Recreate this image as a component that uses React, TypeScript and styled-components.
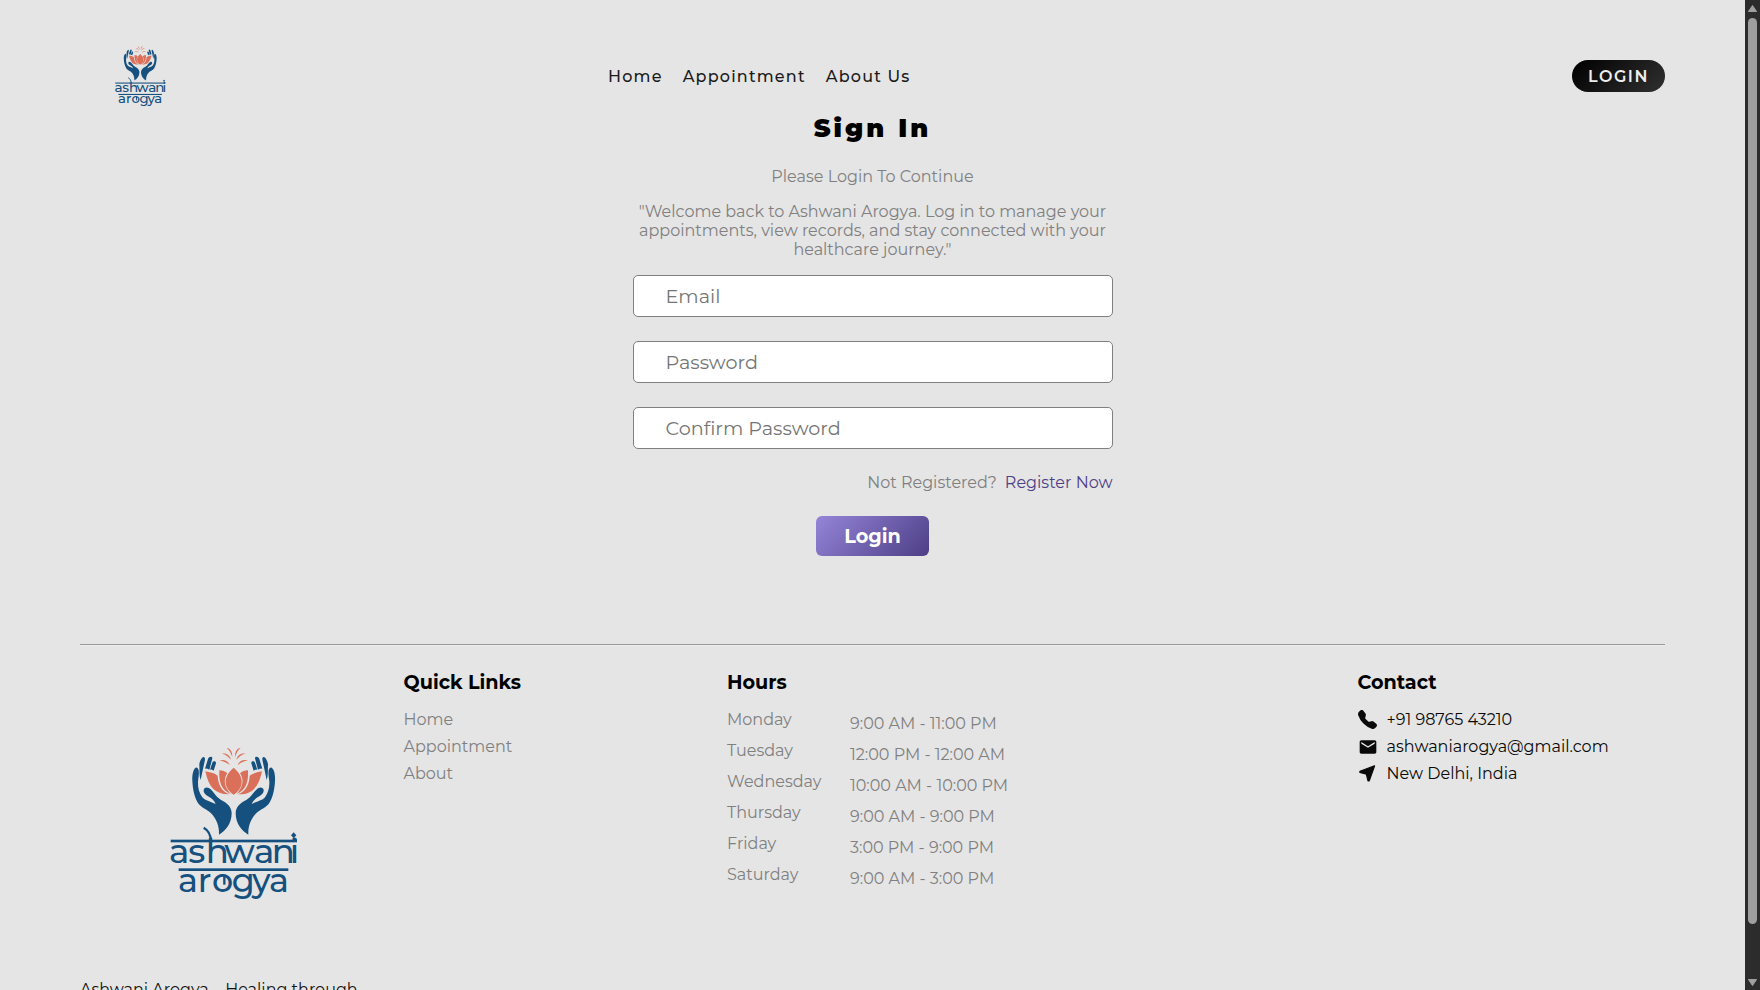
import React from "react";
import styled, { createGlobalStyle } from "styled-components";
import { BsTelephoneFill } from "react-icons/bs";
import { MdEmail } from "react-icons/md";

const GlobalStyle = createGlobalStyle`
  * { box-sizing: border-box; }
  body {
    margin: 0;
    overflow: hidden;
    background: #e5e5e5;
    font-family: Montserrat, Inter, "Noto Sans", sans-serif;
    font-size: 16px;
  }
  ul, h1, h3, p { margin: 0; padding: 0; list-style: none; }
`;

const Viewport = styled.div`
  display: flex;
  height: 990px;
  overflow: hidden;
`;

const Page = styled.div`
  flex: 1;
  padding: 0 80px;
  overflow: hidden;
`;

const Header = styled.header`
  display: flex;
  align-items: center;
  height: 152px;
  margin-bottom: -40px;
`;

const Brand = styled.div`
  width: 527px;
  padding: 1px 0 0 27px;
`;

const Nav = styled.nav`
  display: flex;
  flex: 1;
  gap: 20px;
  padding: 1px 0 0 1px;
`;

const NavLink = styled.a`
  color: #1a1a1a;
  font-weight: 500;
  letter-spacing: 1.2px;
  line-height: 20px;
`;

const PillButton = styled.button`
  width: 93px;
  height: 32px;
  padding: 1px 0 0;
  border: 0;
  border-radius: 16px;
  background: linear-gradient(135deg, #000, #303030);
  color: #ededed;
  font: 600 16px/31px Montserrat, Inter, sans-serif;
  letter-spacing: 1.5px;
`;

const Form = styled.form`
  display: flex;
  flex-direction: column;
  align-items: center;
  width: 480px;
  margin: 0 auto;
`;

const Title = styled.h1`
  font-size: 25.6px;
  font-weight: 900;
  letter-spacing: 3.1px;
  line-height: 32px;
`;

const Subtitle = styled.p`
  margin-top: 23px;
  color: #808080;
  line-height: 20px;
`;

const Welcome = styled.p`
  margin: 15px 0 16px;
  color: #808080;
  line-height: 19px;
  text-align: center;
`;

const Field = styled.input`
  width: 480px;
  height: 42px;
  margin-bottom: 24px;
  padding: 0 32px;
  border: 1px solid #808080;
  border-radius: 5px;
  background: #fff;
  font: 400 19.2px Montserrat, Inter, sans-serif;
  &::placeholder {
    color: #757575;
    opacity: 1;
  }
`;

const RegisterRow = styled.p`
  display: flex;
  align-self: flex-end;
  gap: 8px;
  color: #808080;
  line-height: 20px;
`;

const RegisterLink = styled.a`
  color: #4f3f87;
`;

const SubmitButton = styled.button`
  width: 113px;
  height: 40px;
  margin-top: 23px;
  padding: 1px 0 0;
  border: 0;
  border-radius: 6px;
  background: linear-gradient(135deg, #9585d8, #4d3e86);
  color: #fff;
  font: 700 19.2px/39px Montserrat, Inter, sans-serif;
`;

const Footer = styled.footer`
  margin-top: 88px;
  border-top: 1px solid #999;
  box-shadow: inset 0 1px 0 #eeeeee;
`;

const FooterColumns = styled.div`
  display: grid;
  grid-template-columns: 323.5px 323.5px 630.5px 1fr;
  height: 333px;
  padding-top: 26px;
`;

const FooterLogo = styled.div`
  padding: 59px 0 0 70px;
`;

const FooterHeading = styled.h3`
  margin-bottom: 17px;
  font-size: 19.2px;
  font-weight: 700;
  line-height: 22px;
`;

const LinkList = styled.ul`
  display: grid;
  gap: 7px;
  color: #808080;
  line-height: 20px;
`;

const HoursTable = styled(LinkList)`
  gap: 11px;
`;

const HoursRow = styled.li`
  display: grid;
  grid-template-columns: 123px auto;
`;

const HoursTime = styled.span`
  padding-top: 4px;
  margin-bottom: -4px;
`;

const ContactItem = styled.li`
  display: flex;
  align-items: center;
  gap: 9px;
  height: 20px;
  color: #0a0a0a;
`;

const IconSlot = styled.span`
  display: flex;
  align-items: center;
  justify-content: center;
  width: 20px;
  height: 20px;
  margin-top: -1px;
`;

const Tagline = styled.p`
  margin-top: 2px;
  color: #111;
  line-height: 20px;
`;

const Scrollbar = styled.div`
  display: flex;
  flex-direction: column;
  align-items: center;
  justify-content: space-between;
  width: 15px;
  padding: 5px 0 4px;
  background: #2c2c2c;
`;

const ScrollThumb = styled.div`
  width: 9px;
  height: 906px;
  margin: 6px 0 auto;
  border-radius: 5px;
  background: #9f9f9f;
`;

const LogoSvg = styled.svg`
  display: block;
`;

const LocationArrow = () => (
  <svg width="17" height="17" viewBox="0 0 16 16">
    <path d="M14.6 0.9L0.9 5.9V7L7 8.7L8.5 14.9H9.6Z" fill="currentColor" stroke="currentColor" strokeWidth="1.2" strokeLinejoin="round" />
  </svg>
);

const Hand = () => (
  <g fill="#15507e">
    <path d="M137 113C129 118 126 136 127 152C128 178 134 205 146 222C158 236 176 240 188 255C200 270 208 288 207 314C226 303 245 282 245 250C245 230 231 219 212 209C196 200 192 185 178 175C170 170 162 172 161 180C160 188 166 194 174 199C185 205 193 212 197 222C182 214 168 212 158 203C148 190 143 174 144 155C145 142 148 134 146 121C144 113 140 111 137 113Z" />
    <path d="M148 102C150 92 156 81 161 81C167 82 165 90 163 98L157 126L152 150C147 138 149 122 148 102Z" />
    <path d="M165 116L174 87C176 80 187 77 187 85L178 119Q171 115 165 116Z" />
    <path d="M180 119L187 98C190 91 199 93 198 100L191 122Q186 118 180 119Z" />
  </g>
);

const Petals = () => (
  <g fill="#da705a">
    <path d="M208 121C206 155 214 181 242 192C223 171 219 148 232 130C226 124 217 122 208 121Z" />
    <path d="M166 124C176 172 196 194 238 193C213 183 204 161 203 137C192 128 179 127 166 124Z" />
    <path d="M230 54C242 55 247 66 247 81C242 69 239 60 230 54Z" />
    <path d="M216 71C229 68 239 75 243 89C235 80 228 73 216 71Z" />
    <path d="M209 92C222 87 234 94 239 105C228 97 221 93 209 92Z" />
  </g>
);

const Logo = ({ width }: { width: number }) => (
  <LogoSvg width={width} height={(width * 570) / 510} viewBox="0 0 510 570">
    <Hand />
    <Petals />
    <g transform="translate(502 0) scale(-1 1)">
      <Hand />
      <Petals />
    </g>
    <path d="M251 113C218 140 220 174 251 194C282 174 284 140 251 113Z" fill="#da705a" />
    <g fill="#15507e">
      <rect x="62" y="329" width="379" height="8" />
      <rect x="86" y="415" width="329" height="8" />
      <path d="M431 307l8 9-8 9-8-9z" />
    </g>
    <path d="M161 293C172 299 182 310 183 334" fill="none" stroke="#15507e" strokeWidth="7" />
    <path d="M223 436V464" fill="none" stroke="#15507e" strokeWidth="7" />
    <g fill="#15507e" fontFamily="Montserrat, sans-serif" fontWeight="500">
      <text x="57 115 167 223 312 365 419" y="398" fontSize="102">ashwani</text>
      <text x="84 143 186 245 306 357" y="485" fontSize="100">arogya</text>
    </g>
  </LogoSvg>
);

const hours = [
  ["Monday", "9:00 AM - 11:00 PM"],
  ["Tuesday", "12:00 PM - 12:00 AM"],
  ["Wednesday", "10:00 AM - 10:00 PM"],
  ["Thursday", "9:00 AM - 9:00 PM"],
  ["Friday", "3:00 PM - 9:00 PM"],
  ["Saturday", "9:00 AM - 3:00 PM"],
];

const contacts: [React.ReactNode, string][] = [
  [<BsTelephoneFill size={19} />, "+91 98765 43210"],
  [<MdEmail size={20} />, "ashwaniarogya@gmail.com"],
  [<LocationArrow />, "New Delhi, India"],
];

export default function App() {
  return (
    <Viewport>
      <GlobalStyle />
      <Page>
        <Header>
          <Brand>
            <Logo width={67.5} />
          </Brand>
          <Nav>
            <NavLink>Home</NavLink>
            <NavLink>Appointment</NavLink>
            <NavLink>About Us</NavLink>
          </Nav>
          <PillButton>LOGIN</PillButton>
        </Header>
        <Form>
          <Title>Sign In</Title>
          <Subtitle>Please Login To Continue</Subtitle>
          <Welcome>
            "Welcome back to Ashwani Arogya. Log in to manage your appointments, view records, and stay
            connected with your healthcare journey."
          </Welcome>
          <Field placeholder="Email" />
          <Field placeholder="Password" />
          <Field placeholder="Confirm Password" />
          <RegisterRow>
            <span>Not Registered?</span>
            <RegisterLink>Register Now</RegisterLink>
          </RegisterRow>
          <SubmitButton type="button">Login</SubmitButton>
        </Form>
        <Footer>
          <FooterColumns>
            <FooterLogo>
              <Logo width={170} />
            </FooterLogo>
            <div>
              <FooterHeading>Quick Links</FooterHeading>
              <LinkList>
                <li>Home</li>
                <li>Appointment</li>
                <li>About</li>
              </LinkList>
            </div>
            <div>
              <FooterHeading>Hours</FooterHeading>
              <HoursTable>
                {hours.map(([day, time]) => (
                  <HoursRow key={day}>
                    <span>{day}</span>
                    <HoursTime>{time}</HoursTime>
                  </HoursRow>
                ))}
              </HoursTable>
            </div>
            <div>
              <FooterHeading>Contact</FooterHeading>
              <LinkList>
                {contacts.map(([icon, label]) => (
                  <ContactItem key={label}>
                    <IconSlot>{icon}</IconSlot>
                    {label}
                  </ContactItem>
                ))}
              </LinkList>
            </div>
          </FooterColumns>
          <Tagline>Ashwani Arogya – Healing through</Tagline>
        </Footer>
      </Page>
      <Scrollbar>
        <svg width="9" height="7" viewBox="0 0 9 7"><path d="M4.5 0.5L8.6 6.5H0.4Z" fill="#9f9f9f" stroke="#9f9f9f" /></svg>
        <ScrollThumb />
        <svg width="9" height="7" viewBox="0 0 9 7"><path d="M4.5 6.5L8.6 0.5H0.4Z" fill="#9f9f9f" stroke="#9f9f9f" /></svg>
      </Scrollbar>
    </Viewport>
  );
}
